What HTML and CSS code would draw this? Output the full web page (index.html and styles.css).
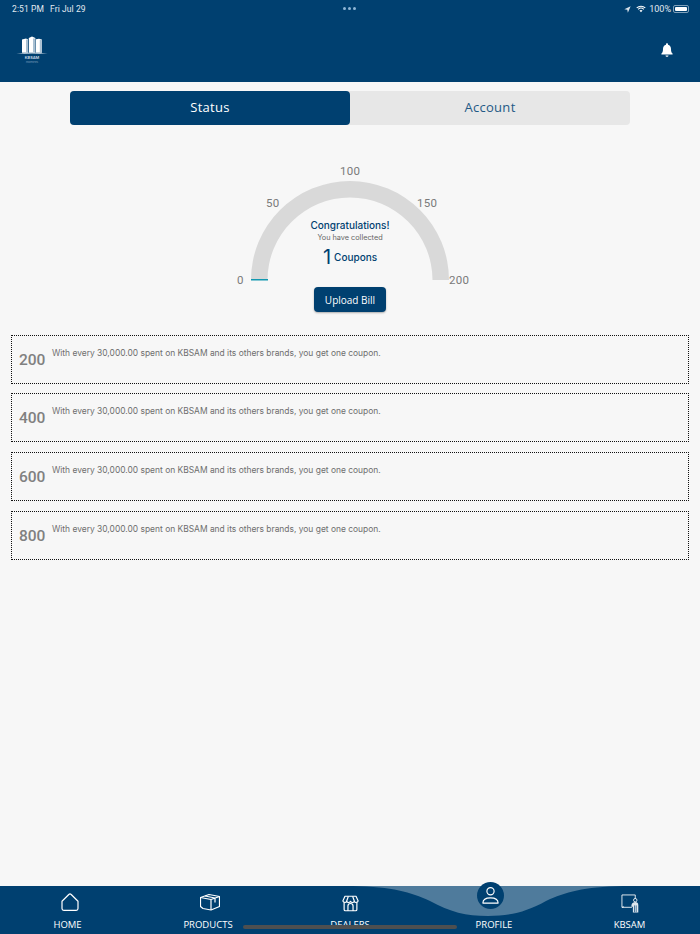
FILE: index.html
```html
<!DOCTYPE html>
<html lang="en">
<head>
<meta charset="utf-8">
<title>KBSAM</title>
<link rel="stylesheet" href="styles.css">
</head>
<body>
<div class="app">
  <header class="header">
    <div class="statusbar">
      <div class="status-left"><span>2:51 PM</span><span>Fri Jul 29</span></div>
      <div class="status-dots"><i></i><i></i><i></i></div>
      <div class="status-right">
        <svg class="ic-loc" viewBox="0 0 10 10"><path d="M9.5.5 .5 4.6l4.2.7.8 4.2z" fill="#dbe4ec"/></svg>
        <svg class="ic-wifi" viewBox="0 0 14 10"><path d="M1 3.4C4.4.3 9.6.3 13 3.4M3 5.4c2.3-2 5.7-2 8 0" fill="none" stroke="#fff" stroke-width="1.5"/><path d="M4.8 7 7 9.4 9.2 7c-1.3-1-3.1-1-4.4 0z" fill="#fff"/></svg>
        <span>100%</span>
        <span class="battery"><b></b></span>
      </div>
    </div>
    <div class="header-main">
      <div class="logo">
        <svg viewBox="0 0 32 19" class="logo-mark">
          <path d="M6 3.6 10 2.6 12 3.4V16.8H6z" fill="#fff"/>
          <path d="M12.8 2 16 .6 19.3 2V16.8H12.8z" fill="#fff"/>
          <path d="M20 3.2 23 2.8 25.8 3.6V16.8H20z" fill="#fff"/>
          <path d="M10 3.6h2v13.2h-2zM17 2.4h2.3v14.4H17zM23.8 3.8h2v13H23.8z" fill="#a9c0d2"/>
          <path d="M.5 18Q16 15 31.5 18 16 16.900 .5 18z" fill="#dfe8ef"/>
        </svg>
        <span class="logo-name">KBSAM</span>
        <span class="logo-sub">PROPERTIES</span>
      </div>
      <svg class="bell" viewBox="0 0 12 14"><path d="M6 .2c.6 0 1 .4 1 1v.5c1.900.5 3 2 3 4.200 0 2.700.6 3.800 1.600 4.700v1H.4v-1C1.400 9.700 2 8.600 2 5.900c0-2.200 1.100-3.700 3-4.200v-.5c0-.6.4-1 1-1zM4.500 12.500h3c0 .8-.7 1.300-1.500 1.300s-1.500-.5-1.500-1.300z" fill="#fff"/></svg>
    </div>
  </header>

  <main class="content">
    <div class="tabs">
      <div class="tab tab-active">Status</div>
      <div class="tab">Account</div>
    </div>

    <section class="gauge-wrap">
      <div class="gauge">
        <svg class="gauge-arc" viewBox="0 0 240 110">
          <path d="M21 99A99 99 0 0 1 219 99H202.500A82.500 82.500 0 0 0 37.500 99z" fill="#d9d9d9"/>
          <rect x="21" y="98" width="17" height="1.5" fill="#1298b0"/>
        </svg>
        <span class="tick t0">0</span>
        <span class="tick t50">50</span>
        <span class="tick t100">100</span>
        <span class="tick t150">150</span>
        <span class="tick t200">200</span>
        <div class="gauge-center">
          <div class="congrats">Congratulations!</div>
          <div class="collected">You have collected</div>
          <div class="coupons"><span class="coupon-num">1</span><span class="coupon-label">Coupons</span></div>
        </div>
      </div>
      <button class="upload">Upload Bill</button>
    </section>

    <section class="cards">
      <div class="card"><span class="card-num">200</span><p class="card-text">With every 30,000.00 spent on KBSAM and its others brands, you get one coupon.</p></div>
      <div class="card"><span class="card-num">400</span><p class="card-text">With every 30,000.00 spent on KBSAM and its others brands, you get one coupon.</p></div>
      <div class="card"><span class="card-num">600</span><p class="card-text">With every 30,000.00 spent on KBSAM and its others brands, you get one coupon.</p></div>
      <div class="card"><span class="card-num">800</span><p class="card-text">With every 30,000.00 spent on KBSAM and its others brands, you get one coupon.</p></div>
    </section>
  </main>

  <nav class="nav">
    <svg class="nav-hump" viewBox="0 0 280 48"><path d="M5 0C45 1 62 6 82 15 102 26 118 30 140 30 162 30 178 26 198 15 218 6 235 1 275 0z" fill="#4f7b9c"/></svg>
    <div class="nav-item">
      <svg class="nav-icon" viewBox="0 0 20 20"><path d="M2 9.2 8.8 2.500a1.700 1.700 0 0 1 2.400 0L18 9.200V16.500a1.800 1.800 0 0 1-1.800 1.800H3.800A1.800 1.800 0 0 1 2 16.500z" fill="none" stroke="#fff" stroke-width="1.2" stroke-linejoin="round"/></svg>
      <span class="nav-label l-home">HOME</span>
    </div>
    <div class="nav-item">
      <svg class="nav-icon" viewBox="0 0 20 20"><g fill="none" stroke="#fff" stroke-width="1.2" stroke-linejoin="round"><path d="M.5 5.5 9 2.500 19.500 4.500V14.500L11 18 3 16.500.5 14.500z"/><path d="M.5 5.5 11 7.500 19.500 4.500M11 7.500V18M5 4 15 6V10.500"/></g></svg>
      <span class="nav-label l-products">PRODUCTS</span>
    </div>
    <div class="nav-item">
      <svg class="nav-icon nav-icon-sm" viewBox="0 0 20 20"><g fill="none" stroke="#fff" stroke-width="1.4" stroke-linejoin="round"><path d="M3.5 1.500h13L19 7a2.400 2.400 0 0 1-4.500.4 2.500 2.500 0 0 1-4.500 0 2.500 2.500 0 0 1-4.500 0A2.400 2.400 0 0 1 1 7z"/><path d="M2.500 9V17a1.500 1.500 0 0 0 1.500 1.500H16A1.500 1.500 0 0 0 17.500 17V9M7 18.500V13a3 3 0 0 1 6 0V18.500M7.500 1.500 5.500 7M12.500 1.500 14.500 7"/></g></svg>
      <span class="nav-label">DEALERS</span>
    </div>
    <div class="nav-item">
      <span class="profile-badge">
        <svg viewBox="0 0 20 20"><g fill="none" stroke="#fff" stroke-width="1.2"><circle cx="10" cy="5.500" r="3.800"/><path d="M2 18c0-3.800 3.200-5.500 8-5.500s8 1.700 8 5.500z" stroke-linejoin="round"/></g></svg>
      </span>
      <span class="nav-label l-profile">PROFILE</span>
    </div>
    <div class="nav-item">
      <svg class="nav-icon nav-icon-teach" viewBox="0 0 20 20"><g fill="none" stroke="#fff" stroke-width=".9"><path d="M11.500 14H1V1H15V5"/><path d="M1 14l2-.5"/><circle cx="15" cy="6.500" r="1.800"/></g><path d="M11 11.500c.8-2 2.200-3 4-3s3.200 1 3.200 3V19.500H12.500V13.500H11z" fill="#dfe8ef"/><path d="M14.200 12v7M16 12v7" stroke="#004070" stroke-width=".7"/></svg>
      <span class="nav-label l-kbsam">KBSAM</span>
    </div>
    <div class="home-indicator"></div>
  </nav>
</div>
</body>
</html>
```
FILE: styles.css
```css
* { box-sizing: border-box; }
html, body { margin: 0; height: 100%; }
body { font-family: Inter, "Noto Sans", "Liberation Sans", sans-serif; background: #f7f7f7; color: #777; }
.app { width: 700px; height: 934px; display: flex; flex-direction: column; overflow: hidden; }

.header { height: 82px; background: #004070; color: #fff; flex: none; display: flex; flex-direction: column; }
.statusbar { height: 18px; padding: 0 11px 0 12px; display: flex; align-items: center; justify-content: space-between; font-family: Roboto, sans-serif; font-size: 8.5px; color: #e3eaf0; position: relative; }
.status-left { display: flex; gap: 6px; letter-spacing: .1px; }
.status-dots { position: absolute; left: 343px; top: 7px; display: flex; gap: 2px; }
.status-dots i { width: 3px; height: 3px; border-radius: 50%; background: #8fb6d6; }
.status-right { display: flex; align-items: center; gap: 2px; font-size: 9px; }
.ic-loc { width: 7px; height: 7px; margin-right: 3px; }
.ic-wifi { width: 10px; height: 8px; margin-right: 1px; }
.battery { width: 16px; height: 8px; border: 1px solid #7fa0ba; border-radius: 2px; padding: 1px; display: block; }
.battery b { display: block; height: 100%; background: #fff; border-radius: 1px; }

.header-main { flex: 1; display: flex; align-items: flex-start; justify-content: space-between; padding: 18px 27px 0 16px; }
.logo { width: 32px; display: flex; flex-direction: column; align-items: center; }
.logo-mark { width: 32px; height: 19px; display: block; }
.logo-name { font-size: 4px; line-height: 6px; font-weight: 600; color: #cfdce6; }
.logo-sub { font-size: 2px; line-height: 3px; color: #8aa8c0; }
.bell { width: 12px; height: 14px; margin-top: 7px; }

.content { flex: 1; display: flex; flex-direction: column; min-height: 0; }
.tabs { margin: 8.5px 70px 0; display: grid; grid-template-columns: 1fr 1fr; height: 34px; border-radius: 4px; background: #e7e7e7; }
.tab { display: flex; align-items: center; justify-content: center; padding-bottom: 1px; font-family: "Open Sans", sans-serif; font-size: 13px; letter-spacing: .3px; color: #1f5a86; }
.tab-active { background: #004070; color: #fff; border-radius: 4px; }

.gauge-wrap { margin-top: 36.5px; display: flex; flex-direction: column; align-items: center; }
.gauge { position: relative; width: 240px; height: 120px; color: #7a7a7a; }
.gauge-arc { position: absolute; left: 0; top: 20px; width: 240px; height: 110px; }
.tick { position: absolute; font-family: Roboto, sans-serif; font-size: 11.5px; line-height: 14px; letter-spacing: .3px; }
.t0 { left: 7px; top: 112px; }
.t50 { left: 36px; top: 35px; }
.t100 { left: 110px; top: 3px; }
.t150 { left: 187px; top: 35px; }
.t200 { left: 219px; top: 112px; }
.gauge-center { position: absolute; left: 0; right: 0; top: 57px; text-align: center; }
.congrats { font-size: 10px; line-height: 14px; font-weight: 500; color: #004070; }
.collected { font-size: 7.3px; line-height: 10px; color: #666; margin-top: 1px; }
.coupons { display: flex; align-items: center; justify-content: center; gap: 3px; margin-top: 4px; height: 20px; color: #004070; }
.coupon-num { font-size: 20px; line-height: 20px; font-weight: 400; }
.coupon-label { font-size: 10px; font-weight: 500; }

.upload { margin-top: 6px; height: 25px; width: 72px; padding: 0; border: 0; border-radius: 4px; background: #004070; color: #fff; font-family: "Open Sans", sans-serif; font-size: 10px; box-shadow: 0 1px 2px rgba(0,0,0,.3); }

.cards { margin: 22.5px 11px 0; display: flex; flex-direction: column; gap: 9.8px; }
.card { height: 49px; border: 1px dotted #111; display: flex; align-items: flex-start; padding: 0 7px; gap: 7px; }
.card-num { font-family: Roboto, sans-serif; font-size: 15.5px; line-height: 20px; font-weight: 500; color: #808080; margin-top: 14px; width: 26px; }
.card-text { margin: 11px 0 0; font-size: 8.43px; line-height: 12px; color: #6e6e6e; white-space: nowrap; }

.nav { position: relative; height: 48px; flex: none; background: #004070; display: grid; grid-template-columns: repeat(5, 140px); }
.nav-hump { position: absolute; left: 348px; top: 0; width: 280px; height: 48px; }
.nav-item { position: relative; display: flex; flex-direction: column; align-items: center; }
.nav-icon { width: 20px; height: 20px; margin-top: 6px; }
.nav-icon-sm { width: 17px; height: 17px; margin-top: 8.5px; }
.nav-icon-teach { width: 19px; height: 19px; margin-top: 7.5px; }
.nav-label { position: absolute; top: 33px; line-height: 11px; font-family: "Open Sans", sans-serif; font-size: 9.5px; color: #fff; white-space: nowrap; }
.l-home { margin-left: -5px; }
.l-products { margin-left: -4px; }
.l-profile { margin-left: 8px; }
.l-kbsam { margin-left: -1px; }
.profile-badge { width: 27px; height: 27px; margin-top: -4px; border-radius: 50%; background: #004070; display: flex; align-items: center; justify-content: center; position: relative; }
.profile-badge svg { width: 19px; height: 19px; }
.home-indicator { position: absolute; left: 243px; top: 39px; width: 214px; height: 4px; border-radius: 2px; background: #4d4f50; }
```
